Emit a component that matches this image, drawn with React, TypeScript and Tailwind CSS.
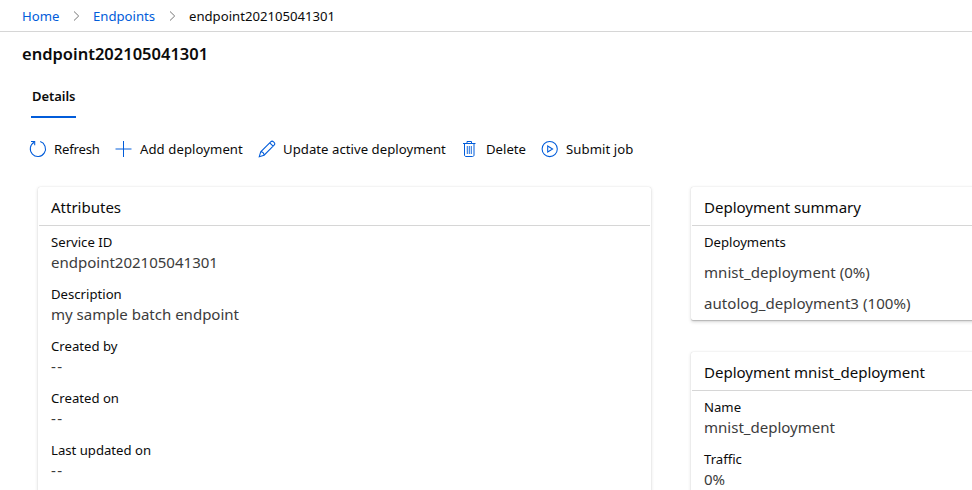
import type { ReactNode } from "react";

const chevron = (
  <svg width="8" height="12" viewBox="0 0 8 12" fill="none" stroke="#777" strokeWidth="1">
    <path d="M1 1.5 5.7 6 1 10.5" />
  </svg>
);

const iconProps = {
  width: 18,
  height: 18,
  viewBox: "0 0 18 18",
  fill: "none",
  stroke: "#015cda",
  strokeWidth: 1.05,
};

const RefreshIcon = () => (
  <svg {...iconProps}>
    <path d="M11.2 1.6A7.6 7.6 0 1 1 5.2 2.2" />
    <path d="M2 1.5h3.7v3.8" />
  </svg>
);

const AddIcon = () => (
  <svg {...iconProps}>
    <path d="M8.5 1v16" />
    <path d="M.5 9h16" strokeOpacity=".75" strokeWidth="1.3" />
  </svg>
);

const EditIcon = () => (
  <svg {...iconProps}>
    <path d="M1.2 16.8l1.5-5L12.7 1.8a2 2 0 0 1 2.8 0l.6.6a2 2 0 0 1 0 2.8L6.1 15.2l-4.9 1.6zM11.7 2.8l3.4 3.4M2.7 11.8c1.8.1 3.2 1.6 3.4 3.4" />
  </svg>
);

const DeleteIcon = () => (
  <svg {...iconProps} strokeWidth={1}>
    <path d="M2 3.5h12.5M6 3.5v-2h4.5v2M3.5 3.5v11.5c0 .9.6 1.5 1.5 1.5h6.5c.9 0 1.5-.6 1.5-1.5V3.5" />
    <path d="M6.3 6v8M8.3 6v8M10.3 6v8" strokeWidth=".9" />
  </svg>
);

const PlayIcon = () => (
  <svg {...iconProps}>
    <circle cx="8.7" cy="9" r="7.6" />
    <path d="M6.7 6v6L11.6 9z" />
  </svg>
);

function Command({ icon, label, className }: { icon: ReactNode; label: string; className: string }) {
  return (
    <div className={`flex h-5 items-center gap-[7px] ${className}`}>
      {icon}
      <span className="leading-5">{label}</span>
    </div>
  );
}

function Card({ title, className, children }: { title: string; className: string; children: ReactNode }) {
  return (
    <section className={`rounded-xs bg-white shadow-[0_1.6px_3.6px_rgba(0,0,0,0.16),0_0.3px_1px_rgba(0,0,0,0.18)] ${className}`}>
      <h2 className="mx-px h-[39px] border-b border-[#d6d6d6] px-3 pt-2.5 text-[15.05px] leading-5 tracking-[-0.02px]">{title}</h2>
      <div className="px-[13px] pt-1.5">{children}</div>
    </section>
  );
}

function Field({ label, value }: { label: string; value: string }) {
  return (
    <div className="mb-3">
      <div className="leading-5">{label}</div>
      <div className={`text-[15.05px] leading-5 text-[#3c3c3c] ${value === "--" ? "tracking-[1.3px]" : "tracking-[-0.02px]"}`}>{value}</div>
    </div>
  );
}

export default function App() {
  return (
    <div className="h-[490px] w-full overflow-hidden bg-white font-['Noto_Sans','Open_Sans',sans-serif] text-[13.15px] whitespace-nowrap text-[#0b0b0b]">
      <nav className="flex h-8 items-center border-b border-[#d6d6d6] pl-[22px] leading-5">
        <span className="w-[51px] text-[#015cda]">Home</span>
        <span className="w-5">{chevron}</span>
        <span className="w-[76px] text-[#015cda]">Endpoints</span>
        <span className="w-5">{chevron}</span>
        <span>endpoint202105041301</span>
      </nav>
      <h1 className="mt-2.5 pl-[22px] text-[16.5px] leading-6 font-semibold">endpoint202105041301</h1>
      <div className="mt-5 ml-[31px] h-8 w-[45px] border-b-2 border-[#015cda] pl-px text-[13px] leading-5 font-semibold tracking-[-0.05px]">Details</div>
      <div className="mt-[21px] flex pl-[29px]">
        <Command className="w-[86px] tracking-[-0.2px]" icon={<RefreshIcon />} label="Refresh" />
        <Command className="w-[143px] tracking-[0.07px]" icon={<AddIcon />} label="Add deployment" />
        <Command className="w-[203px] tracking-[0.04px]" icon={<EditIcon />} label="Update active deployment" />
        <Command className="w-20" icon={<DeleteIcon />} label="Delete" />
        <Command className="w-[100px] tracking-[0.07px]" icon={<PlayIcon />} label="Submit job" />
      </div>
      <div className="mt-7 flex gap-10 pl-[38px]">
        <Card title="Attributes" className="h-[320px] w-[613px] shrink-0">
          <Field label="Service ID" value="endpoint202105041301" />
          <Field label="Description" value="my sample batch endpoint" />
          <Field label="Created by" value="--" />
          <Field label="Created on" value="--" />
          <Field label="Last updated on" value="--" />
        </Card>
        <div className="flex w-[613px] shrink-0 flex-col gap-8">
          <Card title="Deployment summary" className="h-[133px]">
            <div className="leading-5">Deployments</div>
            <div className="mt-2.5 flex flex-col gap-[11px] text-[15.05px] leading-5 tracking-[0.03px] text-[#3c3c3c]">
              <div>mnist_deployment (0%)</div>
              <div>autolog_deployment3 (100%)</div>
            </div>
          </Card>
          <Card title="Deployment mnist_deployment" className="h-[180px]">
            <Field label="Name" value="mnist_deployment" />
            <Field label="Traffic" value="0%" />
          </Card>
        </div>
      </div>
    </div>
  );
}
